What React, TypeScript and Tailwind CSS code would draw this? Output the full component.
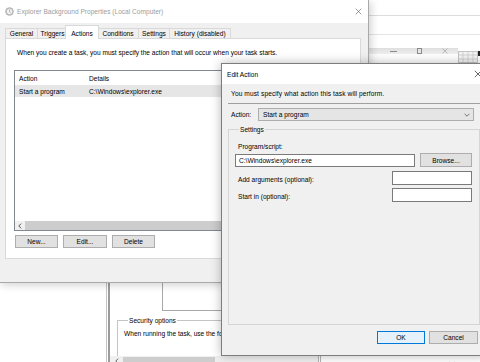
import React from "react";

const T = "text-[6.6px] leading-[9px] text-[#000]";

function XGlyph({ color = "#222", size = 7, sw = 0.9 }: { color?: string; size?: number; sw?: number }) {
  return (
    <svg width={size} height={size} viewBox="0 0 10 10" className="block">
      <path d="M1 1L9 9M9 1L1 9" stroke={color} strokeWidth={sw * 1.4} fill="none" />
    </svg>
  );
}

function Chevron({ dir = "down", color = "#444" }: { dir?: "down" | "left"; color?: string }) {
  if (dir === "left")
    return (
      <svg width="4" height="6" viewBox="0 0 4 6" className="block">
        <path d="M3.2 0.6L0.8 3L3.2 5.4" stroke={color} strokeWidth="0.9" fill="none" />
      </svg>
    );
  return (
    <svg width="6" height="4" viewBox="0 0 6 4" className="block">
      <path d="M0.6 0.8L3 3.2L5.4 0.8" stroke={color} strokeWidth="0.8" fill="none" />
    </svg>
  );
}

function Btn({
  children,
  className = "",
  primary = false,
}: {
  children: React.ReactNode;
  className?: string;
  primary?: boolean;
}) {
  return (
    <div
      className={`flex items-center justify-center h-[13px] border ${T} ${
        primary ? "bg-[#e5f1fb] border-[#0078d7]" : "bg-[#e1e1e1] border-[#adadad]"
      } ${className}`}
    >
      {children}
    </div>
  );
}

function Tab({ label, className = "" }: { label: string; className?: string }) {
  return (
    <div
      className={`h-[10px] flex items-center justify-center whitespace-nowrap border-l border-t border-[#d9d9d9] bg-[#f0f0f0] ${T} ${className}`}
    >
      {label}
    </div>
  );
}

function Desktop() {
  return (
    <div className="absolute inset-0 bg-white flex flex-col">
      <div className="h-[16px] border-b border-[#dcdcdc]" />
      <div className="h-[19px] border-b border-[#e4e4e4]" />
      <div className="flex justify-end pt-[16px]">
        <svg width="22" height="12" viewBox="0 0 22 12" className="block">
          <rect x="0.5" y="0.5" width="19" height="11" fill="#f4f4f4" stroke="#b8b8b8" strokeWidth="0.8" />
          <path d="M0.5 4H19.5M0.5 8H19.5M5 0.5V11.5M10 0.5V11.5M15 0.5V11.5" stroke="#c4c4c4" strokeWidth="0.7" />
          <rect x="20" y="0" width="2" height="5" fill="#222" />
        </svg>
      </div>
    </div>
  );
}

function MainWindow() {
  return (
    <div className="absolute left-[-20px] top-[48px] w-[478px] h-[314px] flex flex-col bg-white">
      <div className="h-[15px] flex justify-end bg-linear-to-b from-[#dedede] to-[#efefef]">
        <div className="w-[26px] flex items-center justify-center">
          <div className="w-[7px] h-px bg-[#8a8a8a]" />
        </div>
        <div className="w-[26px] flex items-center justify-center">
          <div className="w-[5px] h-[6px] border border-[#8a8a8a]" />
        </div>
        <div className="w-[26px] flex items-center justify-center">
          <XGlyph color="#8a8a8a" size={6} sw={0.6} />
        </div>
      </div>
      <div className="flex-1 flex">
        <div className="w-[126px] bg-white" />
        <div className="w-[4px] flex">
          <div className="w-px bg-[#c4c4c4]" />
          <div className="w-px bg-white" />
          <div className="w-[2px] bg-[#9c9c9c]" />
        </div>
        <div className="w-[208px] flex flex-col">
          <div className="flex-1 overflow-hidden flex flex-col pl-[7px]">
            <div className="mt-[171px] flex">
              <div className="w-[45px]" />
              <div className="flex-1 h-[86px] border-l border-b border-[#a8a8a8]" />
            </div>
            <fieldset className="mt-[5px] border border-r-0 border-b-0 border-[#c4c4c4] pl-[6px] pt-[4px] h-[40px]">
              <legend className={`ml-[4px] px-[1px] ${T}`}>Security options</legend>
              <div className={`${T} whitespace-nowrap`}>When running the task, use the following user account:</div>
            </fieldset>
          </div>
          <div className="h-[9px] flex items-center bg-[#f0f0f0]">
            <div className="w-[13px] flex items-center justify-center">
              <Chevron dir="left" color="#555" />
            </div>
            <div className="w-[92px] h-[7px] bg-[#cdcdcd]" />
          </div>
          <div className="h-px" />
        </div>
        <div className="w-[4px] flex">
          <div className="w-px bg-[#b4b4b4]" />
          <div className="w-px bg-white" />
          <div className="w-px bg-[#b4b4b4]" />
        </div>
        <div className="flex-1 flex flex-col justify-end items-end pr-[3px] pb-[1px]">
          <Chevron color="#555" />
        </div>
      </div>
    </div>
  );
}

function PropertiesWindow() {
  return (
    <div className="absolute left-[-1px] top-0 w-[370px] h-[283px] border border-t-0 border-[#a9a9a9] bg-[#f0f0f0] flex flex-col shadow-[2px_2px_8px_rgba(0,0,0,0.18)]">
      <div className="h-[23px] bg-white flex items-center pl-[5px] pr-[6px]">
        <svg width="9" height="9" viewBox="0 0 10 10" className="block">
          <circle cx="5" cy="5" r="4.3" fill="#c9c9c9" stroke="#a4a4a4" strokeWidth="0.8" />
          <circle cx="5" cy="5" r="2.8" fill="#f3f3f3" />
          <path d="M5 3V5.2L6.4 6" stroke="#8c8c8c" strokeWidth="0.7" fill="none" />
        </svg>
        <div className="ml-[3px] flex-1 text-[6.6px] leading-[9px] text-[#9c9c9c] whitespace-nowrap">
          Explorer Background Properties (Local Computer)
        </div>
        <XGlyph color="#555" size={7} sw={0.6} />
      </div>
      <div className="h-[15px] flex items-end pl-[5px]">
        <Tab label="General" className="w-[32px]" />
        <Tab label="Triggers" className="w-[30px]" />
        <div
          className={`relative z-10 -mx-[2px] w-[34px] h-[14px] -mb-px flex items-center justify-center bg-white border-l border-t border-r border-[#d9d9d9] pt-[1px] ${T}`}
        >
          Actions
        </div>
        <Tab label="Conditions" className="w-[41px]" />
        <Tab label="Settings" className="w-[31px]" />
        <Tab label="History (disabled)" className="w-[62px] border-r" />
      </div>
      <div className="ml-[5px] w-[356px] h-[221px] bg-white border border-[#d9d9d9] flex flex-col">
        <div className={`pt-[9px] pl-[11px] ${T} whitespace-nowrap`}>
          When you create a task, you must specify the action that will occur when your task starts.
        </div>
        <div className="ml-[8px] mt-[13px] w-[338px] h-[161px] border border-[#828790] flex flex-col">
          <div className={`h-[14px] flex items-center ${T}`}>
            <div className="w-[73px] pl-[4px]">Action</div>
            <div className="pl-[1px]">Details</div>
          </div>
          <div className={`h-[12px] flex items-center bg-[#e6e6e6] ${T}`}>
            <div className="w-[73px] pl-[4px]">Start a program</div>
            <div className="pl-[1px]">C:\Windows\explorer.exe</div>
          </div>
          <div className="flex-1" />
          <div className="h-[9px] flex bg-[#f0f0f0]">
            <div className="w-[10px] flex items-center justify-center">
              <Chevron dir="left" color="#444" />
            </div>
            <div className="flex-1 bg-[#cdcdcd]" />
          </div>
        </div>
        <div className="mt-[4px] pl-[9px] flex gap-[5px]">
          <Btn className="w-[43px]">New...</Btn>
          <Btn className="w-[44px]">Edit...</Btn>
          <Btn className="w-[43px]">Delete</Btn>
        </div>
      </div>
    </div>
  );
}

function EditActionWindow() {
  return (
    <div className="absolute left-[221px] top-[63px] w-[266px] h-[293px] border border-[#7d7d7d] bg-[#f0f0f0] flex flex-col shadow-[0_0_10px_rgba(0,0,0,0.28)]">
      <div className="h-[20px] bg-white flex items-center pl-[5px] pr-[4px]">
        <div className={`flex-1 ${T}`}>Edit Action</div>
        <XGlyph color="#222" size={8} sw={0.6} />
      </div>
      <div className={`pt-[5px] pl-[9px] ${T} whitespace-nowrap tracking-[0.1px]`}>
        You must specify what action this task will perform.
      </div>
      <div className="mt-[5px] mx-[6px] h-px bg-[#a0a0a0]" />
      <div className="mt-[4px] pl-[9px] flex items-center">
        <div className={`w-[27px] ${T}`}>Action:</div>
        <div className="w-[216px] h-[13px] bg-[#e5e5e5] border border-[#adadad] flex items-center pl-[4px] pr-[3px]">
          <div className={`flex-1 ${T}`}>Start a program</div>
          <Chevron color="#555" />
        </div>
      </div>
      <fieldset className="mt-[4px] mx-[6px] h-[200px] border border-[#d5d5d5] pl-[6px] pr-[7px]">
        <legend className={`ml-[4px] px-[1px] ${T}`}>Settings</legend>
        <div className={`mt-[8px] pl-[3px] ${T}`}>Program/script:</div>
        <div className="mt-[2px] flex items-center">
          <div className={`w-[180px] h-[13px] bg-white border border-[#7a7a7a] flex items-center pl-[3px] ${T}`}>
            C:\Windows\explorer.exe
          </div>
          <Btn className="ml-[5px] w-[52px] h-[14px]">Browse...</Btn>
        </div>
        <div className="mt-[4px] flex items-center">
          <div className={`flex-1 pl-[3px] pt-[2px] ${T}`}>Add arguments (optional):</div>
          <div className="w-[80px] h-[14px] bg-white border border-[#7a7a7a]" />
        </div>
        <div className="mt-[3px] flex items-center">
          <div className={`flex-1 pl-[3px] pt-[2px] ${T}`}>Start in (optional):</div>
          <div className="w-[80px] h-[14px] bg-white border border-[#7a7a7a]" />
        </div>
      </fieldset>
      <div className="mt-[6px] flex justify-end gap-[4px] pr-[8px]">
        <Btn primary className="w-[48px]">OK</Btn>
        <Btn className="w-[49px]">Cancel</Btn>
      </div>
    </div>
  );
}

export default function App() {
  return (
    <div className="relative w-[480px] h-[362px] overflow-hidden bg-white font-['Liberation_Sans',Arial,sans-serif]">
      <Desktop />
      <MainWindow />
      <PropertiesWindow />
      <EditActionWindow />
    </div>
  );
}
